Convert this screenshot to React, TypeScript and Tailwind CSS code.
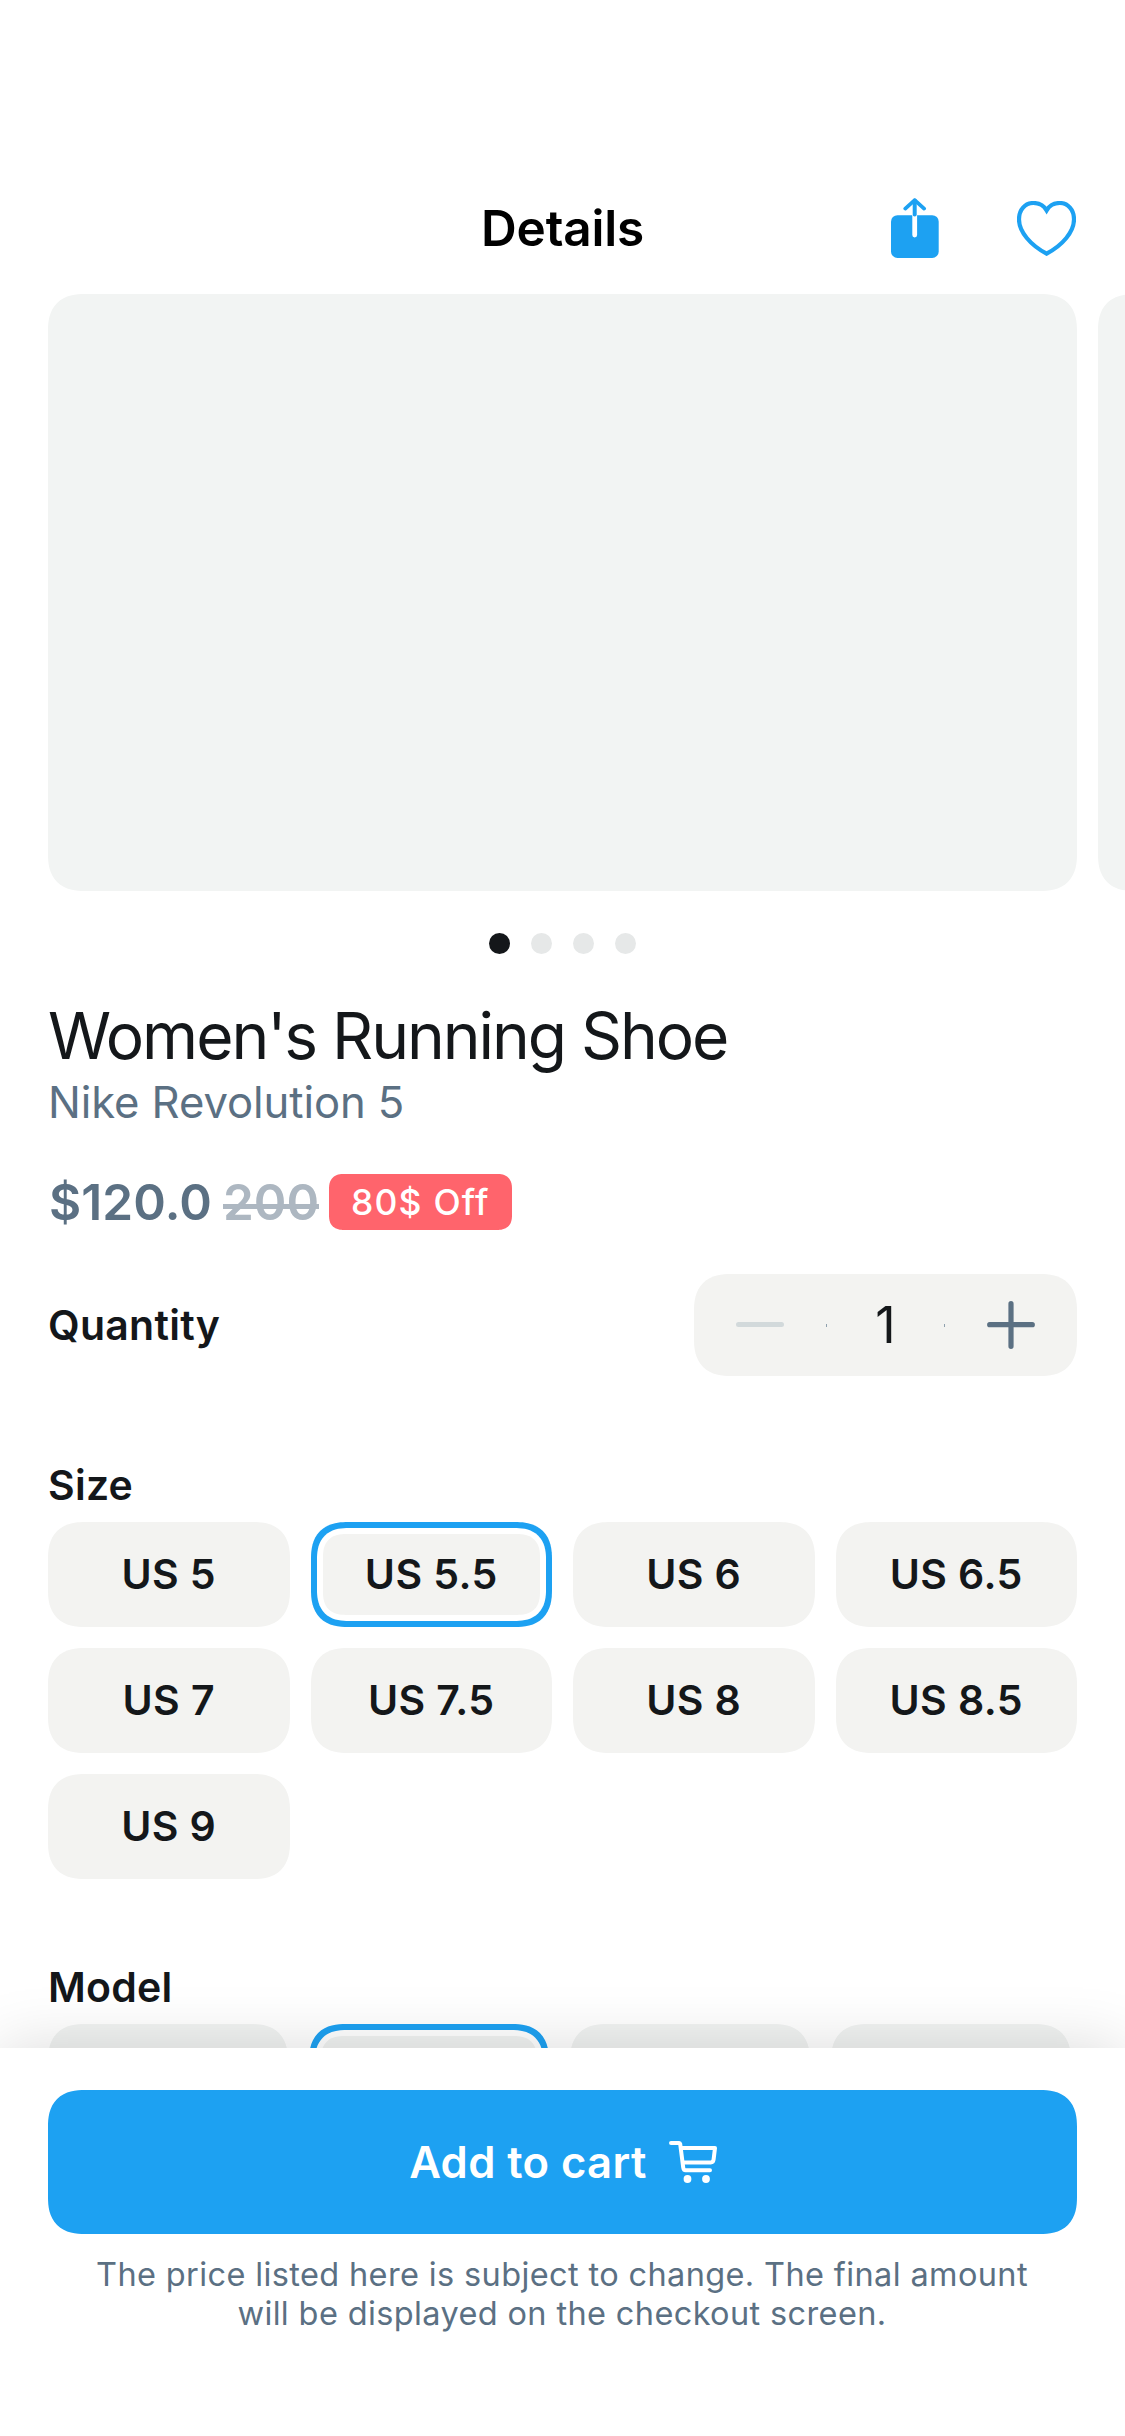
import { useState } from 'react';

const sizes = ['US 5', 'US 5.5', 'US 6', 'US 6.5', 'US 7', 'US 7.5', 'US 8', 'US 8.5', 'US 9'];

function ShareIcon() {
  return (
    <svg width="48" height="60" viewBox="0 0 48 60" fill="none">
      <rect x="0" y="17.2" width="47.7" height="42.8" rx="6.5" fill="#1DA1F2" />
      <path d="M23.7 17V37" stroke="#fff" strokeWidth="4.8" strokeLinecap="round" />
      <path d="M23.7 2.6V16.6" stroke="#1DA1F2" strokeWidth="4" strokeLinecap="round" />
      <path
        d="M14.3 10.6L23.7 2.2L33.1 10.6"
        stroke="#1DA1F2"
        strokeWidth="3.8"
        strokeLinecap="round"
        strokeLinejoin="round"
      />
    </svg>
  );
}

function HeartIcon() {
  return (
    <svg width="59" height="55" viewBox="0 0 59 55" fill="none">
      <path
        d="M29.6 9.4C26.8 4.6 22 2 16.3 2C8 2 2 8.8 2 18.3C2 31 13.5 44 29.6 52.7C45.7 44 57 31 57 18.3C57 8.8 51 2 42.8 2C37 2 32.4 4.6 29.6 9.4Z"
        stroke="#1DA1F2"
        strokeWidth="4.2"
      />
    </svg>
  );
}

function CartIcon() {
  return (
    <svg width="48" height="42" viewBox="0 0 48 42" fill="none">
      <path
        d="M2 2H10.2Q11 2 11.2 3L14.2 26.4Q14.6 29.2 16.6 29.2H41"
        stroke="#fff"
        strokeWidth="4"
        strokeLinecap="round"
        strokeLinejoin="round"
      />
      <path
        d="M12 7H46L44.6 18.6Q44.2 21.5 41.8 21.5H14"
        stroke="#fff"
        strokeWidth="4"
        strokeLinejoin="round"
      />
      <circle cx="18.5" cy="38" r="3.9" fill="#fff" />
      <circle cx="37" cy="38" r="3.9" fill="#fff" />
    </svg>
  );
}

function Label({ children }: { children: string }) {
  return (
    <h2 className="text-[41px] font-semibold leading-[50px] tracking-[0.25px]">{children}</h2>
  );
}

function Option({
  label,
  selected,
  onSelect,
}: {
  label: string;
  selected: boolean;
  onSelect: () => void;
}) {
  if (selected) {
    return (
      <button
        onClick={onSelect}
        className="flex h-[105px] rounded-[37px] border-[6px] border-[#1DA1F2] bg-white p-1.5 [corner-shape:superellipse(1.3)]"
      >
        <span className="flex flex-1 items-center justify-center self-stretch rounded-[23px] bg-[#F3F3F1] text-[41px] font-semibold leading-none tracking-[0.4px] [corner-shape:superellipse(1.3)]">
          {label}
        </span>
      </button>
    );
  }
  return (
    <button
      onClick={onSelect}
      className="flex h-[105px] items-center justify-center rounded-[37px] bg-[#F3F3F1] text-[41px] font-semibold leading-none tracking-[0.4px] [corner-shape:superellipse(1.3)]"
    >
      {label}
    </button>
  );
}

export default function App() {
  const [size, setSize] = useState('US 5.5');
  const [quantity, setQuantity] = useState(1);

  return (
    <div className="flex h-[2436px] w-[1125px] flex-col overflow-hidden bg-white font-[Inter,sans-serif] text-[#14171A]">
      <div className="h-[2048px] overflow-hidden">
        <header className="mt-[180px] grid h-24 grid-cols-[1fr_auto_1fr] items-center px-[49px]">
          <span />
          <h1 className="pt-0.5 text-[49.5px] font-semibold leading-none tracking-[-0.18px] text-black">
            Details
          </h1>
          <div className="flex items-center justify-end gap-[78px]">
            <ShareIcon />
            <HeartIcon />
          </div>
        </header>

        <div className="mt-[18px] flex gap-[21px] pl-12">
          <div className="h-[597px] w-[1029px] shrink-0 rounded-[37px] bg-[#F2F4F3] [corner-shape:superellipse(1.3)]" />
          <div className="h-[597px] w-[1029px] shrink-0 rounded-[37px] bg-[#F2F4F3] [corner-shape:superellipse(1.3)]" />
        </div>

        <div className="mt-[42px] flex justify-center gap-[21px]">
          <i className="size-[21px] rounded-full bg-[#14171A]" />
          <i className="size-[21px] rounded-full bg-[#E6E8E8]" />
          <i className="size-[21px] rounded-full bg-[#E6E8E8]" />
          <i className="size-[21px] rounded-full bg-[#E6E8E8]" />
        </div>

        <main className="mt-11 px-12">
          <h2 className="text-[64px] leading-[76px] tracking-[-2.04px]">Women's Running Shoe</h2>
          <p className="text-[43.6px] leading-[58px] tracking-[-0.08px] text-[#5B7083]">
            Nike Revolution 5
          </p>

          <div className="mt-[42px] flex h-14 items-center pl-px text-[49.5px] font-semibold leading-[56px] text-[#5B7083]">
            <span className="w-[174px] tracking-[0.1px]">$120.0</span>
            <span className="relative w-24 text-[#ADB7C1]">
              200
              <i className="absolute left-0 top-[30px] h-[5px] w-24 bg-[#ADB7C1]" />
            </span>
            <span className="ml-[10px] h-14 w-[183px] rounded-[15px] bg-[#FF646C] pl-[22px] text-[35.5px] font-medium leading-[58px] tracking-[1.18px] text-white [corner-shape:superellipse(1.3)]">
              80$ Off
            </span>
          </div>

          <div className="mt-11 flex items-center justify-between">
            <Label>Quantity</Label>
            <div className="flex h-[102px] w-[383px] items-center justify-between rounded-[37px] bg-[#F3F3F1] px-[42px] [corner-shape:superellipse(1.3)]">
              <button aria-label="Decrease" onClick={() => setQuantity(Math.max(1, quantity - 1))}>
                <svg width="48" height="48" viewBox="0 0 48 48">
                  <path d="M2.5 23.5H45.5" stroke="#D2D9DB" strokeWidth="5" strokeLinecap="round" />
                </svg>
              </button>
              <div className="flex items-center">
                <i className="h-[3px] w-px bg-[#8FA0AE]" />
                <span className="w-[117px] text-center text-[50px] leading-none">{quantity}</span>
                <i className="h-[3px] w-px bg-[#8FA0AE]" />
              </div>
              <button aria-label="Increase" onClick={() => setQuantity(quantity + 1)}>
                <svg width="48" height="48" viewBox="0 0 48 48">
                  <path
                    d="M2.7 23.7H45.3M24 2.7V45.3"
                    stroke="#5B7083"
                    strokeWidth="5.2"
                    strokeLinecap="round"
                  />
                </svg>
              </button>
            </div>
          </div>

          <section className="mt-[84px]">
            <Label>Size</Label>
            <div className="mt-3 grid grid-cols-4 gap-[21px]">
              {sizes.map((s) => (
                <Option key={s} label={s} selected={s === size} onSelect={() => setSize(s)} />
              ))}
            </div>
          </section>

          <section className="mt-[83px]">
            <Label>Model</Label>
            <div className="mt-3 flex gap-[21px]">
              <div className="h-[105px] w-60 rounded-[37px] bg-[#F1F3F2] [corner-shape:superellipse(1.3)]" />
              <div className="h-[105px] w-60 rounded-[37px] border-[6px] border-[#1DA1F2] bg-white p-1.5 [corner-shape:superellipse(1.3)]">
                <div className="h-full rounded-[23px] bg-[#F1F3F2] [corner-shape:superellipse(1.3)]" />
              </div>
              <div className="h-[105px] w-60 rounded-[37px] bg-[#F1F3F2] [corner-shape:superellipse(1.3)]" />
              <div className="h-[105px] w-60 rounded-[37px] bg-[#F1F3F2] [corner-shape:superellipse(1.3)]" />
            </div>
          </section>
        </main>
      </div>

      <footer className="relative h-[388px] bg-white px-12 pt-[42px] shadow-[0_0_60px_rgba(0,0,0,0.15)]">
        <button className="flex h-36 w-full items-center justify-center gap-[22px] rounded-[37px] bg-[#1DA1F2] pl-px text-[43.6px] font-semibold leading-none tracking-[0.4px] text-white [corner-shape:superellipse(1.3)]">
          <span className="pt-px">Add to cart</span>
          <CartIcon />
        </button>
        <p className="mt-[21px] pr-px text-center text-[32.5px] leading-[39px] tracking-[0.37px] text-[#5B7083]">
          The price listed here is subject to change. The final amount
          <br />
          will be displayed on the checkout screen.
        </p>
      </footer>
    </div>
  );
}
